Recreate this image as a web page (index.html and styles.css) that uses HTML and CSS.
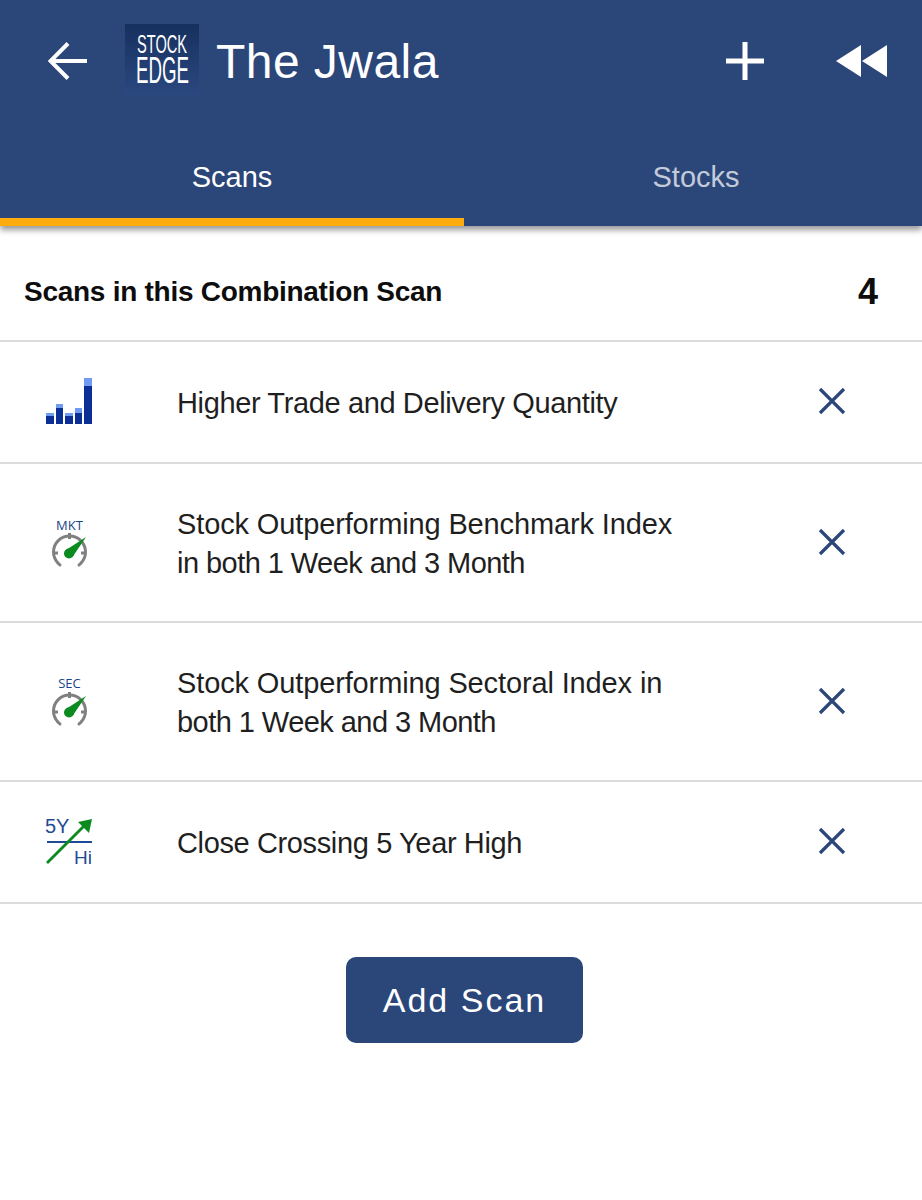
FILE: index.html
```html
<!DOCTYPE html>
<html lang="en">
<head>
<meta charset="utf-8">
<title>The Jwala</title>
<link rel="stylesheet" href="styles.css">
</head>
<body>
<header class="header">
  <div class="appbar">
    <svg class="back" viewBox="0 0 40 40" width="40" height="40"><path d="M39 20H3M20 2.500 2.500 20 20 37.500" fill="none" stroke="#fff" stroke-width="4"/></svg>
    <svg class="logo" viewBox="0 0 74 72" width="74" height="72">
      <defs><linearGradient id="lg" x1="0" y1="0" x2="0" y2="1"><stop offset="0" stop-color="#16305e"/><stop offset="1" stop-color="#2b4880"/></linearGradient></defs>
      <rect width="74" height="72" fill="url(#lg)"/>
      <text x="12" y="29" font-family="Liberation Sans" font-size="25" fill="#fff" textLength="50" lengthAdjust="spacingAndGlyphs">STOCK</text>
      <text x="11" y="59" font-family="Liberation Sans" font-size="36" fill="#fff" textLength="53" lengthAdjust="spacingAndGlyphs">EDGE</text>
    </svg>
    <h1 class="title">The Jwala</h1>
    <svg class="plus" viewBox="0 0 38 38" width="38" height="38"><path d="M19 0V38M0 19H38" stroke="#fff" stroke-width="5"/></svg>
    <svg class="rewind" viewBox="0 0 52 34" width="52" height="34"><path d="M0 17 25 1V33ZM26 17 51 1V33Z" fill="#fff"/></svg>
  </div>
  <nav class="tabs">
    <div class="tab tab-active">Scans</div>
    <div class="tab tab-idle">Stocks</div>
  </nav>
</header>
<main>
  <div class="summary"><span class="summary-label">Scans in this Combination Scan</span><span class="summary-count">4</span></div>
  <div class="row row-short">
    <svg class="ricon" viewBox="0 0 48 48" width="48" height="48">
      <g fill="#0b2f94"><rect x="1" y="38" width="8" height="8"/><rect x="11" y="30" width="7" height="16"/><rect x="20" y="38" width="8" height="8"/><rect x="30" y="35" width="7" height="11"/><rect x="39" y="8" width="8" height="38"/></g>
      <g fill="#6f9bf2"><rect x="1" y="35" width="8" height="3"/><rect x="11" y="26" width="7" height="4"/><rect x="20" y="35" width="8" height="3"/><rect x="30" y="30" width="7" height="5"/><rect x="39" y="0" width="8" height="8"/></g>
    </svg>
    <div class="rtext ls-b">Higher Trade and Delivery Quantity</div>
    <svg class="close" viewBox="0 0 28 28" width="28" height="28"><path d="M2 2 26 26M26 2 2 26" stroke="#2b4679" stroke-width="3.200"/></svg>
  </div>
  <div class="row row-tall">
    <svg class="ricon" viewBox="0 0 48 56" width="48" height="56">
      <text x="24.500" y="15" text-anchor="middle" font-family="Open Sans" font-size="13" fill="#1a4488">MKT</text>
      <path d="M15 50 13 48.100A16 16 0 1 1 36 48.100L34 50" fill="none" stroke="#808080" stroke-width="3" stroke-linecap="round"/>
      <path d="M24.500 18V24M8 38H13M36 38H41" stroke="#808080" stroke-width="3" fill="none"/>
      <circle cx="24" cy="38.500" r="5" fill="#0a8a1f"/><path d="M21 35 41 22 27.500 42Z" fill="#0a8a1f"/>
    </svg>
    <div class="rtext"><span class="ls-a">Stock Outperforming Benchmark Index</span><br><span class="ls-c">in both 1 Week and 3 Month</span></div>
    <svg class="close" viewBox="0 0 28 28" width="28" height="28"><path d="M2 2 26 26M26 2 2 26" stroke="#2b4679" stroke-width="3.200"/></svg>
  </div>
  <div class="row row-tall">
    <svg class="ricon" viewBox="0 0 48 56" width="48" height="56">
      <text x="24.500" y="14" text-anchor="middle" font-family="Open Sans" font-size="13" fill="#1a4488">SEC</text>
      <path d="M15 50 13 48.100A16 16 0 1 1 36 48.100L34 50" fill="none" stroke="#808080" stroke-width="3" stroke-linecap="round"/>
      <path d="M24.500 18V24M8 38H13M36 38H41" stroke="#808080" stroke-width="3" fill="none"/>
      <circle cx="24" cy="38.500" r="5" fill="#0a8a1f"/><path d="M21 35 41 22 27.500 42Z" fill="#0a8a1f"/>
    </svg>
    <div class="rtext"><span class="ls-a">Stock Outperforming Sectoral Index in</span><br><span class="ls-c">both 1 Week and 3 Month</span></div>
    <svg class="close" viewBox="0 0 28 28" width="28" height="28"><path d="M2 2 26 26M26 2 2 26" stroke="#2b4679" stroke-width="3.200"/></svg>
  </div>
  <div class="row row-short">
    <svg class="ricon" viewBox="0 0 48 48" width="48" height="48">
      <text x="0" y="15" font-family="Liberation Sans" font-size="20" fill="#1f4b96">5Y</text>
      <rect x="2" y="23" width="45" height="2" fill="#1f4b96"/>
      <text x="29" y="46" font-family="Liberation Sans" font-size="19" fill="#1f4b96">Hi</text>
      <path d="M2 45 40 7" stroke="#0a8a1f" stroke-width="2.800"/><path d="M47 1 44 15 33 4Z" fill="#0a8a1f"/>
    </svg>
    <div class="rtext ls-b">Close Crossing 5 Year High</div>
    <svg class="close" viewBox="0 0 28 28" width="28" height="28"><path d="M2 2 26 26M26 2 2 26" stroke="#2b4679" stroke-width="3.200"/></svg>
  </div>
  <div class="actions"><button class="add">Add Scan</button></div>
</main>
</body>
</html>
```

FILE: styles.css
```css
* { box-sizing: border-box; }
html, body { margin: 0; background: #fff; }
body { font-family: "Liberation Sans", Arial, sans-serif; color: #1f1f1f; width: 922px; height: 1200px; overflow: hidden; }
.header { background: #2b4679; height: 226px; box-shadow: 0 4px 6px rgba(0,0,0,.4); display: flex; flex-direction: column; }
.appbar { height: 122px; display: flex; align-items: center; padding-left: 48px; }
.back { flex: none; }
.logo { margin-left: 37px; margin-bottom: 2px; flex: none; }
.title { margin: 0 0 0 17px; color: #fff; font-weight: 400; font-size: 48px; letter-spacing: .45px; flex: 1; }
.plus { flex: none; margin-right: 72px; }
.rewind { flex: none; margin-right: 34px; }
.tabs { flex: 1; display: flex; }
.tab { display: flex; justify-content: center; padding-top: 39px; font-size: 29px; }
.tab-active { color: #fff; width: 464px; border-bottom: 8px solid #fdab0d; }
.tab-idle { color: #c3cbdb; width: 458px; padding-left: 6px; }
.summary { height: 116px; display: flex; align-items: center; justify-content: space-between; padding: 18px 44px 0 24px; border-bottom: 2px solid #dcdcdc; color: #0d0d0d; }
.summary-label { font-size: 28px; font-weight: 700; letter-spacing: -.27px; }
.summary-count { font-size: 36px; font-weight: 700; }
.row { display: flex; align-items: center; border-bottom: 2px solid #dcdcdc; padding-left: 45px; }
.row-short { height: 122px; }
.row-tall { height: 159px; }
.ricon { flex: none; margin-right: 84px; }
.rtext { flex: 1; font-size: 29px; line-height: 39px; padding-top: 2px; }
.ls-a { letter-spacing: -.13px; }
.ls-b { letter-spacing: -.37px; }
.ls-c { letter-spacing: -.55px; }
.close { flex: none; margin: 0 76px 2px 0; }
.actions { display: flex; justify-content: center; padding: 53px 0 0 7px; }
.add { width: 237px; height: 86px; background: #2b4679; color: #fff; border: 0; border-radius: 10px; font: 400 34px "Liberation Sans", Arial, sans-serif; letter-spacing: 2px; }
```
